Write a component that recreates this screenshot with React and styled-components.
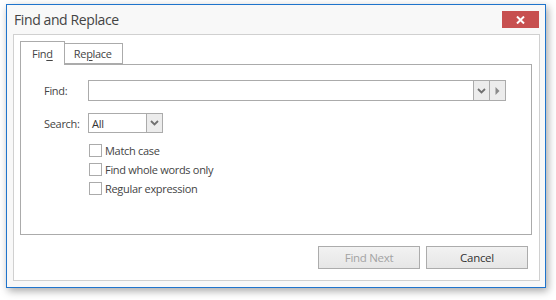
import React from "react";
import styled, { createGlobalStyle } from "styled-components";

const Global = createGlobalStyle`
    html, body {
        margin: 0;
        padding: 0;
        background: #ffffff;
    }
    body {
        font-family: "Open Sans", "Noto Sans", sans-serif;
        font-size: 11px;
        letter-spacing: -0.3px;
        color: #444444;
    }
`;

const Screen = styled.div`
    width: 556px;
    height: 300px;
    padding: 4px 0 0 6px;
    box-sizing: border-box;
`;

const Window = styled.div`
    width: 540px;
    height: 284px;
    box-sizing: border-box;
    border: 1px solid #1f74cc;
    background: #f8f8f8;
    box-shadow: 2px 3px 8px rgba(0, 0, 0, 0.35);
    display: flex;
    flex-direction: column;
    padding: 0 5px 6px 6px;
`;

const TitleBar = styled.div`
    height: 29px;
    display: flex;
    align-items: flex-start;
    justify-content: space-between;
`;

const Title = styled.div`
    font-size: 14px;
    letter-spacing: -0.4px;
    color: #444444;
    padding: 5px 0 0 1px;
`;

const CloseButton = styled.div`
    width: 37px;
    height: 17px;
    margin-top: 6px;
    margin-right: 1px;
    background: #c75050;
    display: flex;
    align-items: center;
    justify-content: center;
`;

const Panel = styled.div`
    flex: 1;
    background: #ffffff;
    border: 1px solid #d0d0d0;
    padding: 6px 7px 0 6px;
    display: flex;
    flex-direction: column;
`;

const TabStrip = styled.div`
    display: flex;
    align-items: flex-end;
    height: 23px;
`;

const Tab = styled.div`
    box-sizing: border-box;
    height: ${props => (props.active ? "24px" : "21px")};
    margin-bottom: ${props => (props.active ? "-1px" : "0")};
    padding: ${props => (props.active ? "4px 11px 0 11px" : "2px 10px 0 9px")};
    border: 1px solid #ababab;
    border-bottom: ${props => (props.active ? "none" : "1px solid #ababab")};
    border-left: ${props => (props.active ? "1px solid #ababab" : "none")};
    background: #ffffff;
    color: #444444;
    position: relative;
    z-index: ${props => (props.active ? 1 : 0)};
`;

const Key = styled.span`
    text-decoration: underline;
    text-underline-offset: 2px;
`;

const TabPage = styled.div`
    height: 171px;
    box-sizing: border-box;
    border: 1px solid #ababab;
    padding: 15px 25px 0 23px;
    display: flex;
    flex-direction: column;
`;

const FieldRow = styled.div`
    display: flex;
    align-items: center;
    margin-bottom: ${props => props.gap || 0}px;
`;

const Label = styled.div`
    width: 44px;
    flex-shrink: 0;
`;

const TextBox = styled.div`
    box-sizing: border-box;
    height: ${props => props.h}px;
    width: ${props => (props.w ? props.w + "px" : "auto")};
    flex: ${props => (props.w ? "none" : 1)};
    border: 1px solid #ababab;
    background: #ffffff;
    display: flex;
    align-items: stretch;
`;

const Value = styled.div`
    flex: 1;
    padding-left: 3px;
    display: flex;
    align-items: center;
    color: #333333;
`;

const DropButton = styled.div`
    width: 15px;
    border-left: 1px solid #ababab;
    background: #ececec;
    display: flex;
    align-items: center;
    justify-content: center;
`;

const Checks = styled.div`
    display: flex;
    flex-direction: column;
    gap: 6px;
    padding-left: 45px;
    margin-top: 11px;
`;

const CheckRow = styled.label`
    display: flex;
    align-items: center;
    gap: 3px;
    height: 13px;
`;

const Box = styled.span`
    width: 13px;
    height: 13px;
    box-sizing: border-box;
    border: 1px solid #ababab;
    background: #ffffff;
`;

const Footer = styled.div`
    display: flex;
    justify-content: flex-end;
    gap: 6px;
    padding: 11px 4px 0 0;
`;

const Button = styled.div`
    width: 102px;
    height: 23px;
    box-sizing: border-box;
    border: 1px solid #acacac;
    background: linear-gradient(#f2f2f2, #e6e6e6);
    display: flex;
    align-items: center;
    justify-content: center;
    font-size: 11.5px;
    color: ${props => (props.disabled ? "#a3a3a3" : "#333333")};
`;

const Chevron = () => (
    <svg width="9" height="6" viewBox="0 0 9 6">
        <path d="M1 1 L4.5 4.5 L8 1" fill="none" stroke="#707070" strokeWidth="1.8" />
    </svg>
);

const RightArrow = () => (
    <svg width="5" height="8" viewBox="0 0 5 8">
        <path d="M0.5 0 L4.5 4 L0.5 8 Z" fill="#8a8a8a" />
    </svg>
);

export default function App() {
    return (
        <>
            <Global />
            <Screen>
                <Window>
                    <TitleBar>
                        <Title>Find and Replace</Title>
                        <CloseButton>
                            <svg width="9" height="8" viewBox="0 0 9 8">
                                <path d="M1 0.5 L8 7.5 M8 0.5 L1 7.5" stroke="#ffffff" strokeWidth="2" />
                            </svg>
                        </CloseButton>
                    </TitleBar>
                    <Panel>
                        <TabStrip>
                            <Tab active>Fin<Key>d</Key></Tab>
                            <Tab>Re<Key>p</Key>lace</Tab>
                        </TabStrip>
                        <TabPage>
                            <FieldRow gap={12}>
                                <Label>Find:</Label>
                                <TextBox h={21}>
                                    <Value />
                                    <DropButton><Chevron /></DropButton>
                                    <DropButton><RightArrow /></DropButton>
                                </TextBox>
                            </FieldRow>
                            <FieldRow>
                                <Label>Search:</Label>
                                <TextBox h={20} w={75}>
                                    <Value>All</Value>
                                    <DropButton><Chevron /></DropButton>
                                </TextBox>
                            </FieldRow>
                            <Checks>
                                <CheckRow><Box />Match case</CheckRow>
                                <CheckRow><Box />Find whole words only</CheckRow>
                                <CheckRow><Box />Regular expression</CheckRow>
                            </Checks>
                        </TabPage>
                        <Footer>
                            <Button disabled>Find Next</Button>
                            <Button>Cancel</Button>
                        </Footer>
                    </Panel>
                </Window>
            </Screen>
        </>
    );
}
